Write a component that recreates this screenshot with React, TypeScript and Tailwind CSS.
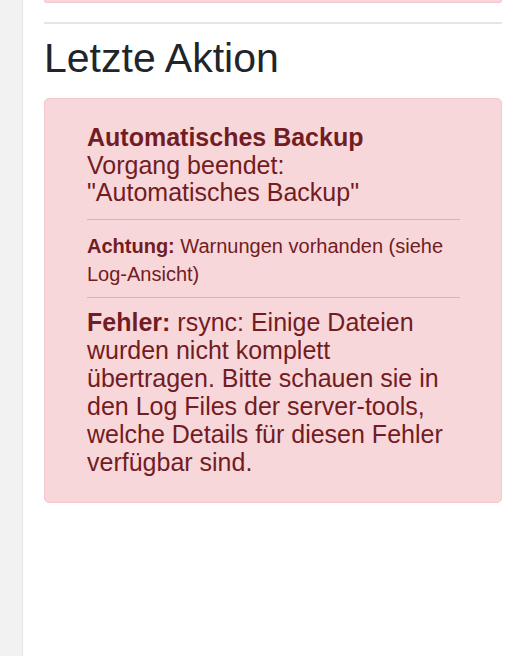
import React from "react";

export default function App() {
  return (
    <div className="flex min-h-screen bg-white font-['Liberation_Sans',Arial,sans-serif]">
      {/* Sidebar strip */}
      <aside className="w-[23px] shrink-0 bg-[#f2f2f2] border-r border-[#e4e4e4]" />

      <main className="flex-1 pl-[21px] pr-[20px]">
        {/* Bottom edge of previous alert */}
        <div className="h-[3px] bg-[#f8d7da] border-x border-b border-[#f5c6cb] rounded-b-[4px]" />

        <hr className="mt-[19px] border-0 border-t-2 border-[#e5e5e5]" />

        <h2 className="mt-[10px] text-[41px] leading-[48px] text-[#212529]">Letzte Aktion</h2>

        {/* Last action alert */}
        <div className="mt-[16px] bg-[#f8d7da] border border-[#f5c6cb] rounded-[5px] text-[#721c24] pt-[25px] pb-[26px] pl-[42px] pr-[41px]">
          <div className="text-[25px] leading-[27.7px]">
            <strong className="font-bold">Automatisches Backup</strong>
            <br />
            Vorgang beendet:
            <br />
            "Automatisches Backup"
          </div>

          <hr className="mt-[12px] border-0 border-t border-[#eaaab2]" />

          <div className="mt-[12px] text-[20px] leading-[28px]">
            <strong className="font-bold">Achtung:</strong> Warnungen vorhanden (siehe Log-Ansicht)
          </div>

          <hr className="mt-[9px] border-0 border-t border-[#eaaab2]" />

          <div className="mt-[10px] text-[25px] leading-[28px]">
            <strong className="font-bold">Fehler:</strong> rsync: Einige Dateien wurden nicht komplett
            übertragen. Bitte schauen sie in den Log Files der server-tools, welche Details für diesen
            Fehler verfügbar sind.
          </div>
        </div>
      </main>
    </div>
  );
}
